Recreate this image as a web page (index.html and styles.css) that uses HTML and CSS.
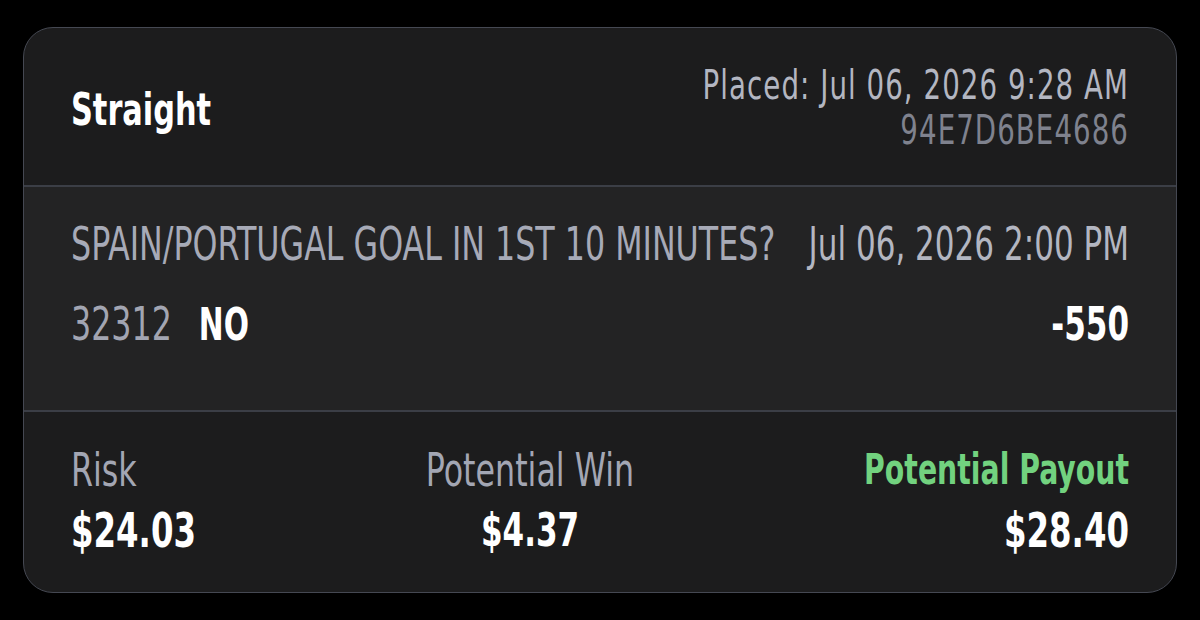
FILE: index.html
```html
<!DOCTYPE html>
<html lang="en">
<head>
    <meta charset="UTF-8">
    <meta name="viewport" content="width=device-width, initial-scale=1.0">
    <title>Bet Ticket</title>
    <link rel="stylesheet" href="styles.css">
</head>
<body>
    <div class="ticket">
        <!-- Header -->
        <div class="ticket-header">
            <div class="squeeze header-inner">
                <div class="bet-type">Straight</div>
                <div class="placed">
                    <div class="placed-date">Placed: Jul 06, 2026 9:28 AM</div>
                    <div class="ticket-id">94E7D6BE4686</div>
                </div>
            </div>
        </div>

        <!-- Selection -->
        <div class="ticket-body">
            <div class="squeeze">
                <div class="row">
                    <span class="market">SPAIN/PORTUGAL GOAL IN 1ST 10 MINUTES?</span>
                    <span class="event-date">Jul 06, 2026 2:00 PM</span>
                </div>
                <div class="row row-pick">
                    <span class="pick">
                        <span class="pick-id">32312</span>
                        <span class="pick-name">NO</span>
                    </span>
                    <span class="odds">-550</span>
                </div>
            </div>
        </div>

        <!-- Amounts -->
        <div class="ticket-footer">
            <div class="squeeze footer-inner">
                <div class="amount amount-left">
                    <div class="label">Risk</div>
                    <div class="value">$24.03</div>
                </div>
                <div class="amount amount-center">
                    <div class="label">Potential Win</div>
                    <div class="value value-small">$4.37</div>
                </div>
                <div class="amount amount-right">
                    <div class="label label-green">Potential Payout</div>
                    <div class="value">$28.40</div>
                </div>
            </div>
        </div>
    </div>
</body>
</html>
```

FILE: styles.css
```css
body {
    margin: 0;
    padding: 27px 23px;
    background-color: #000;
    font-family: "DejaVu Sans Condensed", "DejaVu Sans", "Liberation Sans", Arial, sans-serif;
    color: #fff;
}
.ticket {
    height: 566px;
    box-sizing: border-box;
    border: 1px solid #454852;
    border-radius: 30px;
    background-color: #1c1c1d;
    overflow: hidden;
    display: flex;
    flex-direction: column;
}

/* no condensed font available: lay out wider, then squeeze horizontally */
.squeeze {
    flex-shrink: 0;
    width: calc(100% / 0.75);
    transform: scaleX(0.75);
    transform-origin: left top;
    white-space: nowrap;
}

.ticket-header {
    flex-shrink: 0;
    height: 157px;
    padding: 0 47px;
    display: flex;
    align-items: center;
    border-bottom: 2px solid #3b3e46;
}
.header-inner {
    display: flex;
    justify-content: space-between;
    align-items: center;
}
.bet-type {
    font-size: 45px;
    font-weight: bold;
    line-height: 50px;
    margin-top: 6px;
}
.placed {
    text-align: right;
    font-size: 41px;
    line-height: 45px;
    letter-spacing: 1.4px;
    padding-top: 3px;
}
.placed-date {
    color: #b3b6c1;
}
.ticket-id {
    color: #7f828e;
}

.ticket-body {
    flex-shrink: 0;
    height: 225px;
    box-sizing: border-box;
    background-color: #232324;
    padding: 32px 47px 0;
    border-bottom: 2px solid #3b3e46;
}
.row {
    display: flex;
    justify-content: space-between;
    align-items: center;
    height: 50px;
    line-height: 50px;
}
.row-pick {
    margin-top: 30px;
}
.market {
    font-size: 47px;
    color: #a7aab7;
}
.event-date {
    font-size: 46px;
    color: #b3b6c1;
}
.pick {
    display: flex;
    align-items: baseline;
}
.pick-id {
    font-size: 47px;
    color: #a2a5b2;
}
.pick-name {
    font-size: 44px;
    font-weight: bold;
    margin-left: 36px;
}
.odds {
    font-size: 46px;
    font-weight: bold;
}

.ticket-footer {
    flex: 1;
    padding: 36px 47px 0;
}
.footer-inner {
    display: flex;
    justify-content: space-between;
}
.label {
    font-size: 47px;
    line-height: 44px;
    color: #a3a6b3;
}
.label-green {
    font-size: 42px;
    font-weight: bold;
    color: #72d27f;
}
.value {
    margin-top: 8px;
    font-size: 48px;
    font-weight: bold;
    line-height: 60px;
}
.value-small {
    font-size: 46px;
}
.amount-center {
    text-align: center;
}
.amount-right {
    text-align: right;
}
```
